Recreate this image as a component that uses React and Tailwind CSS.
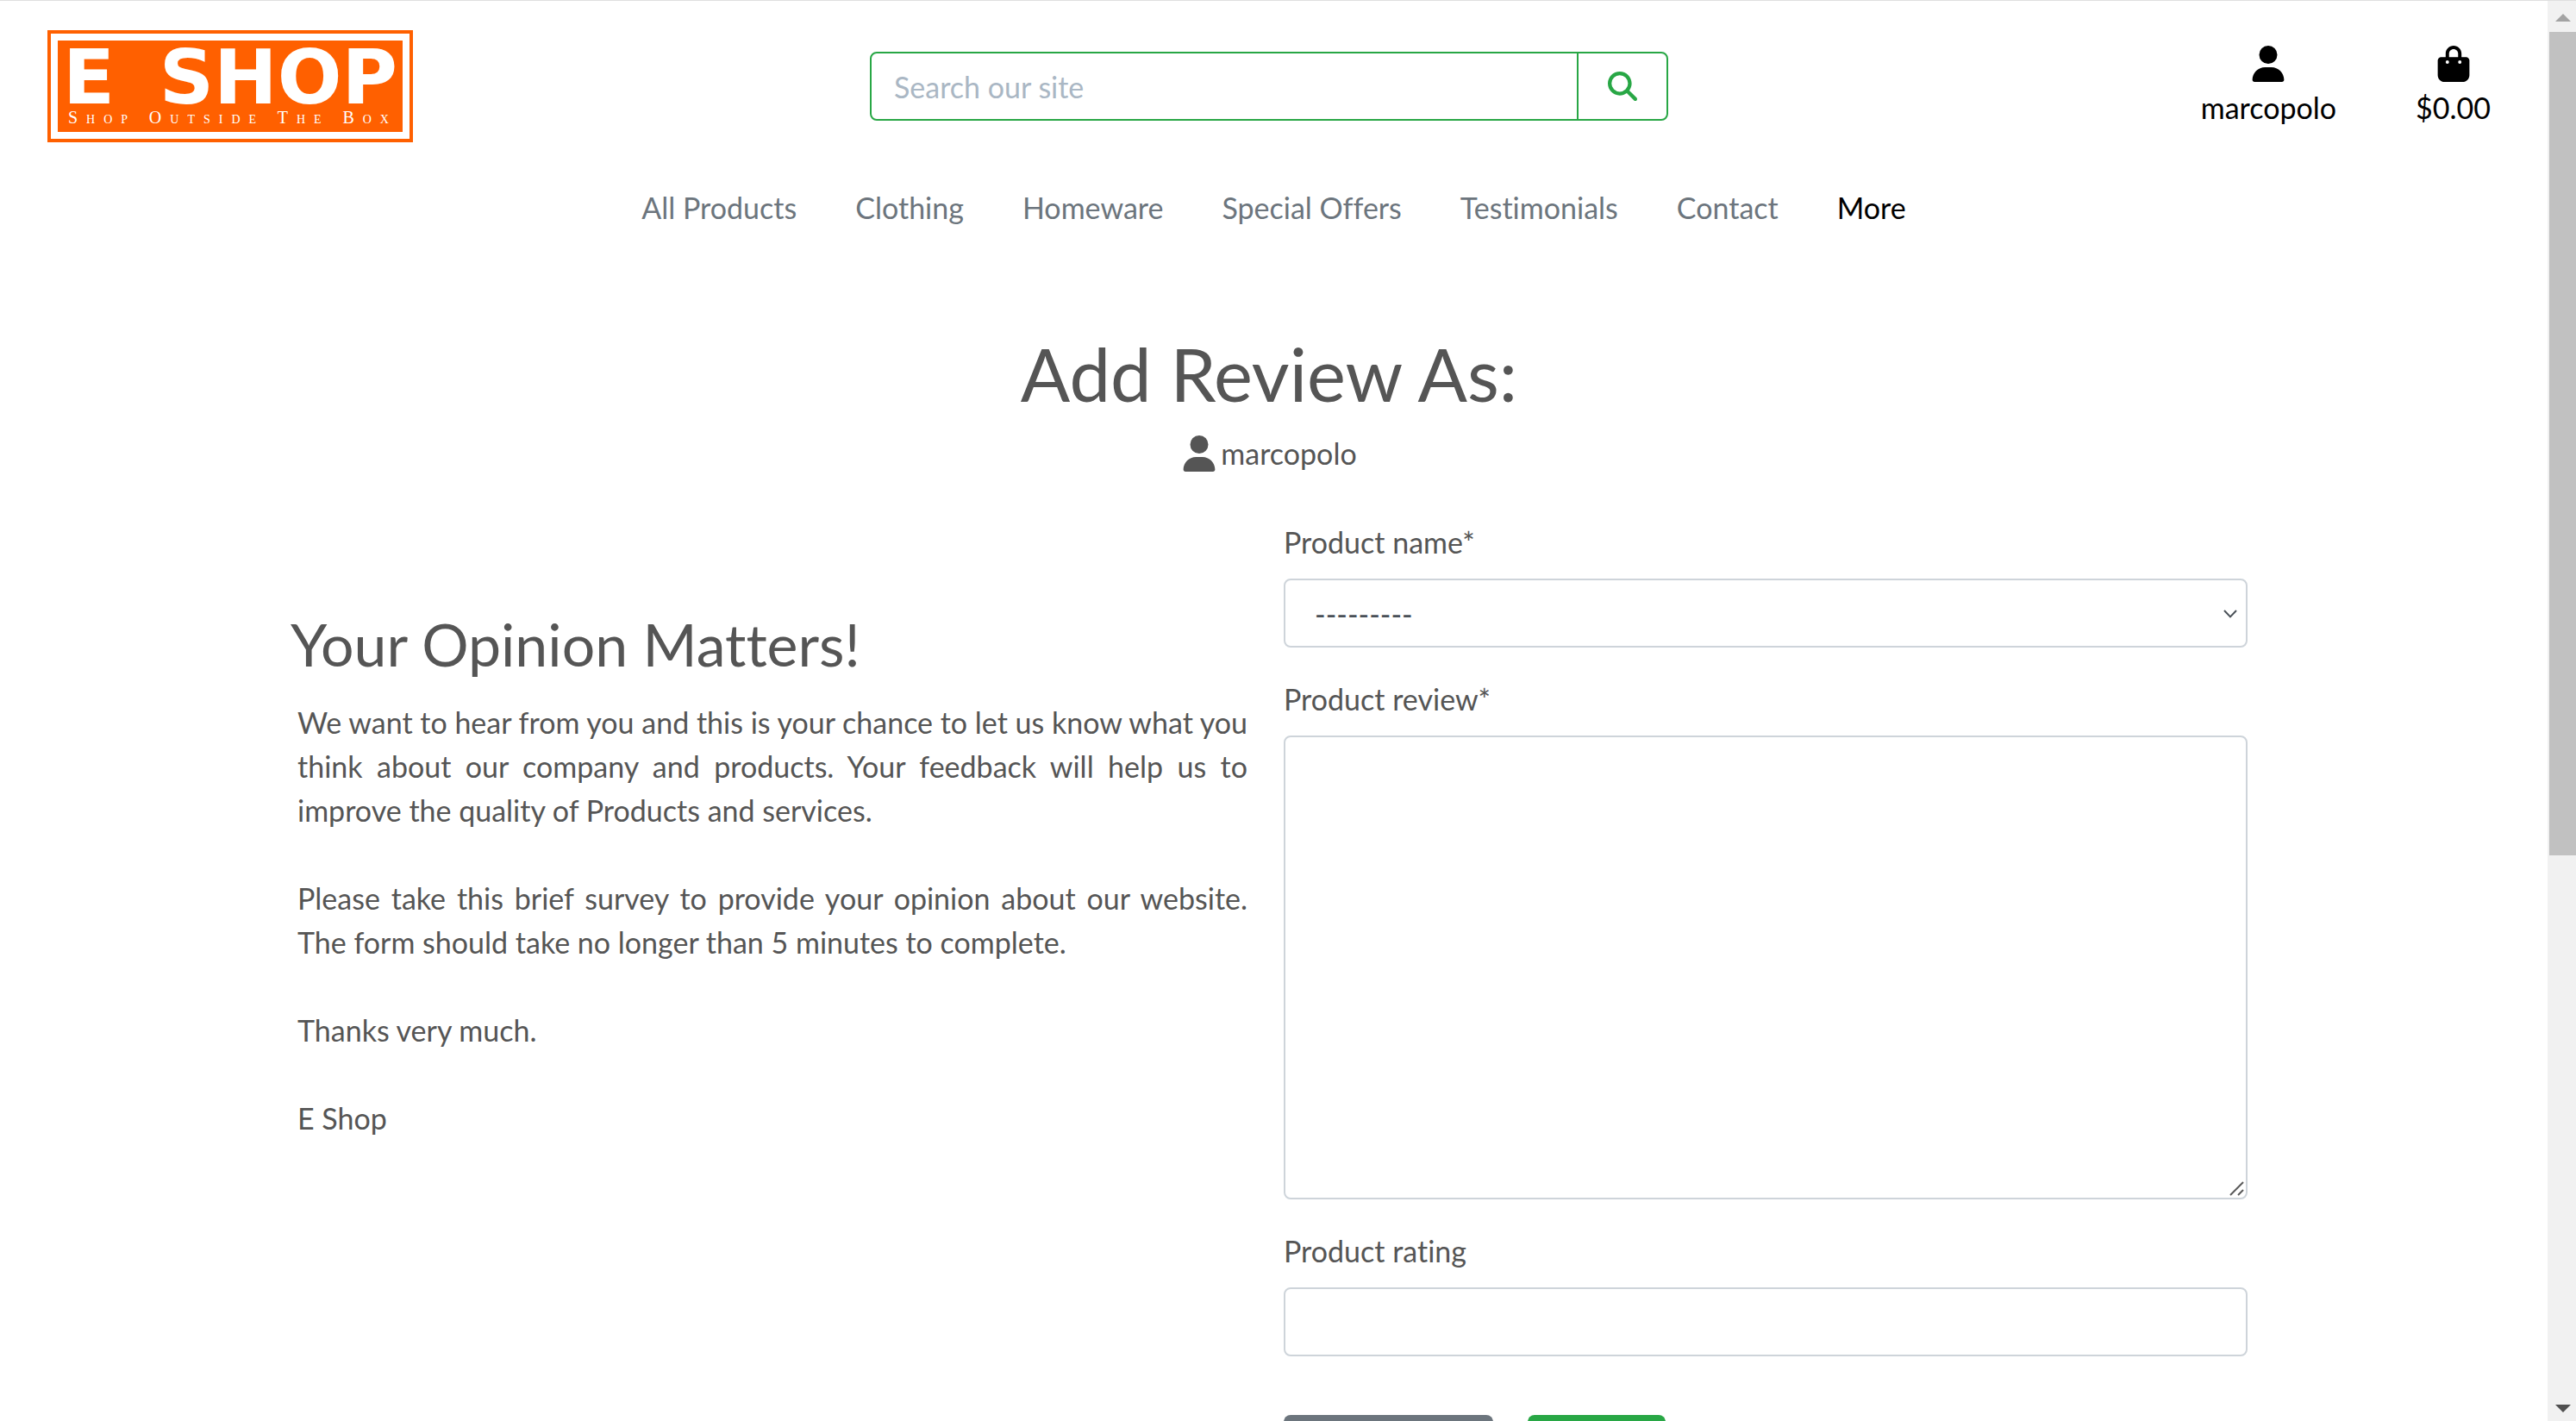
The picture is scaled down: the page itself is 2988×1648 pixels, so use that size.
import React from "react";
import { FaUser, FaBagShopping, FaMagnifyingGlass } from "react-icons/fa6";

const links = [
  "All Products",
  "Clothing",
  "Homeware",
  "Special Offers",
  "Testimonials",
  "Contact",
];

function Logo() {
  return (
    <a
      href="#home"
      aria-label="E Shop home"
      className="w-[424px] h-[130px] border-4 border-[#ff6000] p-2"
    >
      <span className="flex h-full flex-col items-stretch justify-center bg-[#ff6000] px-1.5 text-white">
        <span className="flex justify-between font-['DejaVu_Sans'] text-[88px] leading-[72px] font-bold">
          <span>E</span>
          <span>SHOP</span>
        </span>
        <span className="flex justify-between pl-1.5 font-['Liberation_Serif'] text-[20px] leading-[20px] tracking-[10px] [font-variant:small-caps] whitespace-nowrap">
          <span>Shop</span>
          <span>Outside</span>
          <span>The</span>
          <span>Box</span>
        </span>
      </span>
    </a>
  );
}

function Header() {
  return (
    <header>
      <div className="grid grid-cols-[1fr_minmax(0,926px)_1fr] items-center pt-[34px] pr-[66px] pl-[55px]">
        <Logo />
        <form className="flex h-20 rounded-lg border-2 border-[#28a745]">
          <input
            type="search"
            aria-label="Search our site"
            placeholder="Search our site"
            className="min-w-0 flex-1 bg-transparent px-[26px] outline-none placeholder:text-[#aab7c4]"
          />
          <button
            type="submit"
            aria-label="Search"
            className="flex w-[104px] items-center justify-center border-l-2 border-[#28a745] text-[#28a745]"
          >
            <FaMagnifyingGlass size={34} />
          </button>
        </form>
        <div className="flex justify-end gap-[92px] pt-0.5 text-black">
          <a href="#account" className="flex flex-col items-center gap-1">
            <FaUser size={42} />
            marcopolo
          </a>
          <a href="#bag" className="flex flex-col items-center gap-1">
            <FaBagShopping size={42} />
            $0.00
          </a>
        </div>
      </div>
      <nav className="mt-[50px] flex justify-center gap-[68px] text-[#6c757d]">
        {links.map((l) => (
          <a key={l} href="#nav">
            {l}
          </a>
        ))}
        <a href="#more" className="text-black">
          More
        </a>
      </nav>
    </header>
  );
}

const field =
  "block w-full rounded-lg border-2 border-[#ced4da] bg-white text-[#495057] outline-none";

function ReviewForm() {
  return (
    <form className="flex flex-col gap-[34px]">
      <div className="flex flex-col gap-[17px]">
        <label htmlFor="name">Product name*</label>
        <div className="relative">
          <select id="name" className={field + " h-20 appearance-none px-[34px]"}>
            <option>---------</option>
          </select>
          <svg
            viewBox="0 0 16 10"
            className="pointer-events-none absolute top-[36px] right-[12px] h-[10px] w-4"
            fill="none"
            stroke="#495057"
            strokeWidth="2"
          >
            <path d="M1 1l7 7.4L15 1" />
          </svg>
        </div>
      </div>
      <div className="flex flex-col gap-[17px]">
        <label htmlFor="review">Product review*</label>
        <div className="relative">
          <textarea id="review" className={field + " h-[538px] resize-none p-6"} />
          <svg
            viewBox="0 0 17 17"
            className="pointer-events-none absolute right-[4px] bottom-[4px] h-[17px] w-[17px]"
            stroke="#5a5a5a"
            strokeWidth="2"
          >
            <path d="M1 16L16 1M10 16l6-6" />
          </svg>
        </div>
      </div>
      <div className="flex flex-col gap-[17px]">
        <label htmlFor="rating">Product rating</label>
        <input id="rating" type="text" className={field + " h-20 px-6"} />
      </div>
      <div className="mt-[34px] flex gap-10">
        <button
          type="button"
          aria-label="Cancel"
          className="h-20 w-[243px] rounded-lg bg-[#6c757d]"
        />
        <button
          type="submit"
          aria-label="Submit"
          className="h-20 w-40 rounded-lg bg-[#28a745]"
        />
      </div>
    </form>
  );
}

function Scrollbar() {
  return (
    <div aria-hidden="true" className="flex w-[33px] shrink-0 flex-col items-center bg-[#f1f1f1] pl-0.5">
      <div className="flex h-9 items-center pt-0.5">
        <svg viewBox="0 0 18 9" className="h-[9px] w-[18px]" fill="#a3a3a3">
          <path d="M0 9L9 0l9 9z" />
        </svg>
      </div>
      <div className="h-[58%] w-full bg-[#c1c1c1]" />
      <svg viewBox="0 0 18 9" className="mt-auto mb-[10px] h-[9px] w-[18px]" fill="#505050">
        <path d="M0 0l9 9 9-9z" />
      </svg>
    </div>
  );
}

export default function App() {
  return (
    <div className="flex h-screen overflow-hidden border-t border-[#dfdfdf] bg-white font-['Lato',sans-serif] text-[34px] leading-[51px] text-[#555] [font-variant-ligatures:none]">
      <div className="min-w-0 flex-1 overflow-hidden">
        <Header />
        <main className="pt-[116px] pr-[11px]">
          <div className="mx-auto max-w-[2270px]">
            <div className="text-center">
              <h1 className="text-[85px] leading-[102px]">Add Review As:</h1>
              <p className="mt-4 flex items-center justify-center gap-1">
                <FaUser size={42} />
                marcopolo
              </p>
            </div>
            <div className="mt-[52px] grid grid-cols-2 gap-[34px]">
              <section className="pt-[103px]">
                <h2 className="text-[68px] leading-[82px]">Your Opinion Matters!</h2>
                <div className="mt-6 flex flex-col gap-[51px] px-2 text-justify">
                  <p>
                    We want to hear from you and this is your chance to let us know
                    what you think about our company and products. Your feedback will
                    help us to improve the quality of Products and services.
                  </p>
                  <p>
                    Please take this brief survey to provide your opinion about our
                    website. The form should take no longer than 5 minutes to
                    complete.
                  </p>
                  <p>Thanks very much.</p>
                  <p>E Shop</p>
                </div>
              </section>
              <ReviewForm />
            </div>
          </div>
        </main>
      </div>
      <Scrollbar />
    </div>
  );
}
